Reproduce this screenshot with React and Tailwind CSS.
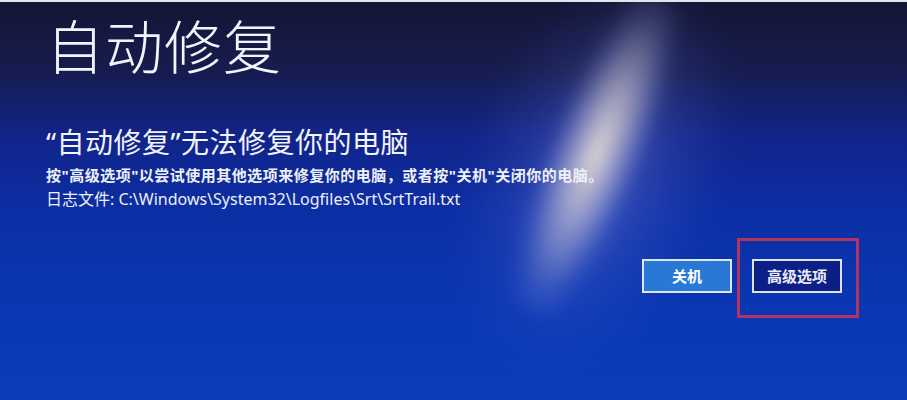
import React from "react";

const font = { fontFamily: "'Noto Sans', 'Noto Sans CJK SC', sans-serif" };

const App = () => {
  return (
    <div
      className="relative w-[907px] h-[400px] overflow-hidden border-t-2 border-[#e4e6ee] bg-[linear-gradient(180deg,#141534_0%,#161c50_18%,#11248a_34%,#0c2ea4_52%,#0a36b2_75%,#0b3dbb_100%)]"
      style={font}
    >
      {/* light streak on the photographed screen */}
      <div className="pointer-events-none absolute left-[465px] top-[-40px] w-[260px] h-[420px] rotate-[22deg] rounded-full bg-[radial-gradient(ellipse_at_center,rgba(150,160,230,0.34)_0%,rgba(90,110,210,0.15)_45%,transparent_70%)] blur-[12px]" />
      <div className="pointer-events-none absolute left-[550px] top-[-18px] w-[92px] h-[340px] rotate-[22deg] rounded-full bg-[radial-gradient(ellipse_at_center,rgba(236,228,216,0.92)_0%,rgba(205,198,214,0.6)_32%,rgba(140,150,220,0.2)_62%,transparent_80%)] blur-[7px]" />

      <div className="relative flex flex-col pl-[46px] pt-[16px] text-white">
        <h1 className="text-[58px] leading-none font-light tracking-[1px] text-[#f2f4fb]">
          自动修复
        </h1>
        <h2 className="mt-[52px] text-[28px] leading-none font-normal tracking-[0.5px] text-[#f2f4fb]">
          “自动修复”无法修复你的电脑
        </h2>
        <p className="mt-[12px] text-[15px] leading-none font-bold tracking-[0.5px] text-[#eef0f8]">
          按"高级选项"以尝试使用其他选项来修复你的电脑，或者按"关机"关闭你的电脑。
        </p>
        <p className="mt-[8px] text-[16px] leading-none text-[#eef0f8]">
          日志文件: C:\Windows\System32\Logfiles\Srt\SrtTrail.txt
        </p>

        <div className="mt-[31px] flex items-center justify-end gap-[5px] pr-[48px]">
          <button className="mt-[-4px] w-[90px] h-[34px] border-2 border-[#dfe6f3] bg-[#2a78d6] text-[15px] font-bold text-white">
            关机
          </button>
          <div className="border-[3px] border-[#b2335f] pl-[12px] pr-[14px] pt-[18px] pb-[22px]">
            <button className="w-[90px] h-[34px] border-2 border-[#dfe3ee] bg-[#0c1f86] text-[15px] font-bold text-[#e8ebf5]">
              高级选项
            </button>
          </div>
        </div>
      </div>
    </div>
  );
};

export default App;
